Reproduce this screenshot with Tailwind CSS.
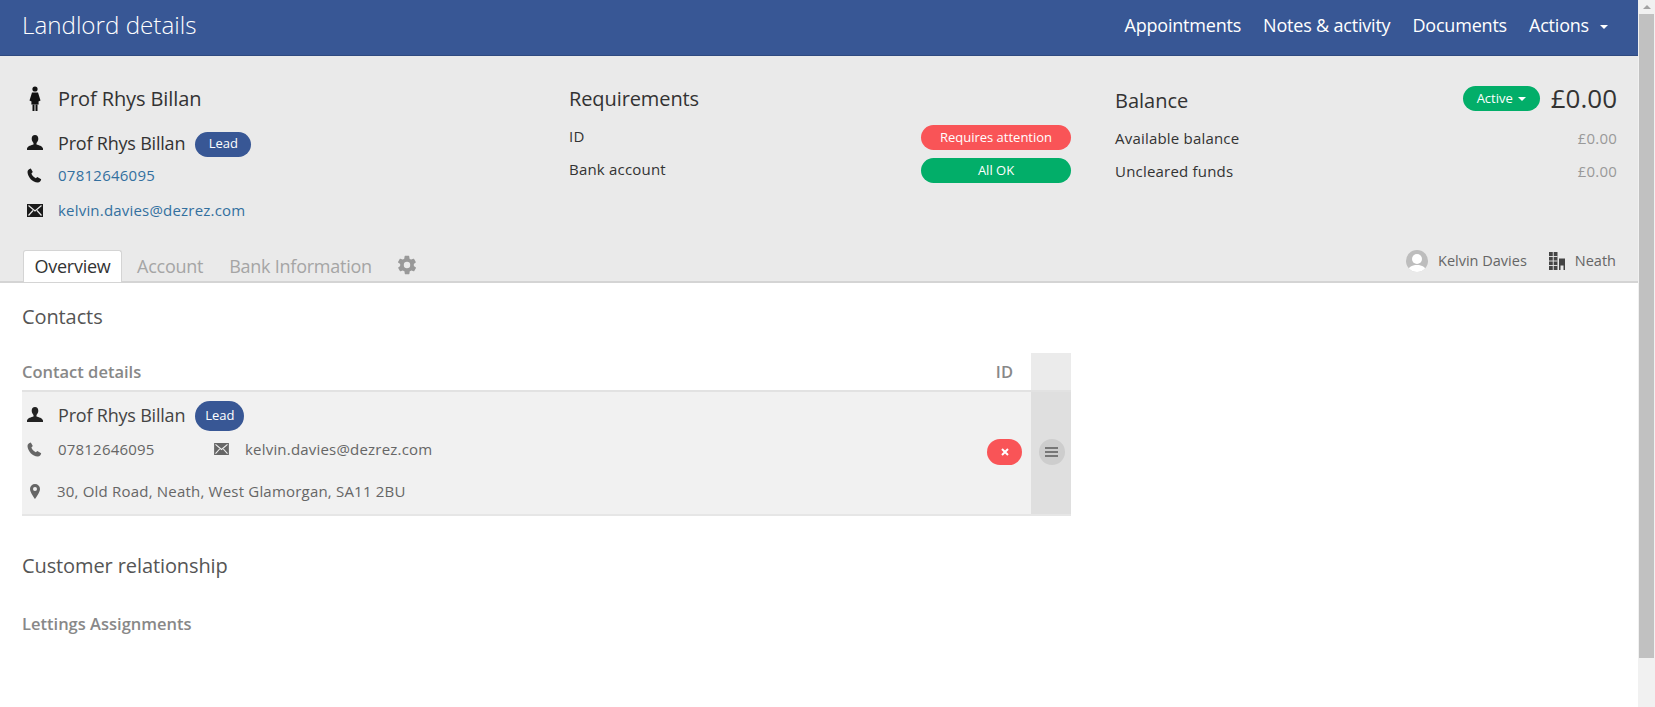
<!DOCTYPE html>
<html lang="en">
<head>
    <meta charset="UTF-8">
    <title>Landlord details</title>
    <script src="https://cdn.jsdelivr.net/npm/@tailwindcss/browser@4"></script>
</head>
<body class="font-['Open_Sans',sans-serif] bg-white text-[#333] overflow-hidden">
<div class="flex h-[707px] w-[1655px]">
    <div class="w-[1638px] shrink-0">
        <!-- top bar -->
        <header class="h-[56px] bg-[#385795] border-b border-[#2f4a80] flex items-center justify-between pl-[22px] pr-[30px] text-white">
            <h1 class="text-[24.200px] font-light leading-[50px] -mt-[5px]">Landlord details</h1>
            <nav class="flex items-center gap-[22px] text-[18px] tracking-[-0.2px] -mt-[5px]">
                <a>Appointments</a>
                <a>Notes &amp; activity</a>
                <a>Documents</a>
                <a class="flex items-center gap-[11px]">Actions <span class="w-0 h-0 border-x-[4px] border-x-transparent border-t-[4px] border-t-white mt-[3px]"></span></a>
            </nav>
        </header>

        <!-- summary panel -->
        <section class="h-[227px] bg-[#eaeaea] border-b-2 border-[#d4d4d4] px-[22px] flex flex-col justify-between">
            <div class="grid grid-cols-[503px_502px_502px] gap-x-[44px] pt-[29px]">
                <div>
                    <div class="flex items-center h-[28px] text-[20px] tracking-[-0.1px]">
                        <svg class="w-[22px] h-[28px] mr-[13px] ml-[1px]" viewBox="0 0 22 28"><circle cx="12" cy="4" r="2.6" fill="#111"/><path d="M9 7.5h6l2.5 8-2 1 .2 3H8.300l.2-3-2-1z" fill="#111"/><path d="M9.500 19.500h2v6.500h-2zM12.500 19.500h2v6.500h-2z" fill="#111"/></svg>
                        <span>Prof Rhys Billan</span>
                    </div>
                    <div class="flex items-center mt-[17px] h-[26px]">
                        <svg class="w-[16px] h-[16px] ml-[5px] mr-[15px]" viewBox="0 0 16 16"><path d="M8 0c2.200 0 3.300 1.700 3.300 3.800 0 1.700-.8 3.200-1.800 4.100v1.500c2 .6 6 1.500 6.500 4.100v1.500H0v-1.500c.5-2.600 4.500-3.500 6.500-4.100V7.900C5.500 7 4.700 5.500 4.700 3.800 4.700 1.700 5.800 0 8 0z" fill="#1a1a1a"/></svg>
                        <span class="text-[18px] tracking-[-0.2px]">Prof Rhys Billan</span>
                        <span class="ml-[10px] h-[25px] w-[56px] flex items-center justify-center rounded-full bg-[#385795] text-white text-[13px] mt-[2px]">Lead</span>
                    </div>
                    <div class="flex items-center mt-[8px] h-[22px]">
                        <svg class="w-[15px] h-[15px] ml-[5px] mr-[16px]" viewBox="0 0 15 15"><path d="M3.800 0.500 5.800 4 4.400 5.600c.7 2 2.300 3.700 4.400 4.700L10.300 9l3.900 2.300c-.3 1.700-1.600 3.300-3.500 3.200C5.500 14.200.8 9.200.5 3.900.5 2.200 2 .7 3.800.5z" fill="#1a1a1a"/></svg>
                        <a class="text-[15px] text-[#33709f] tracking-[0.25px]">07812646095</a>
                    </div>
                    <div class="flex items-center mt-[13px] h-[22px]">
                        <svg class="w-[16px] h-[13px] ml-[5px] mr-[15px]" viewBox="0 0 16 13"><rect width="16" height="13" fill="#1a1a1a"/><path d="M1.500 1.500 8 7l6.500-5.500M1.500 11.500 6 6.500M14.500 11.500 10 6.500" stroke="#eaeaea" stroke-width="1.200" fill="none"/></svg>
                        <a class="text-[15px] text-[#33709f] tracking-[0.2px]">kelvin.davies@dezrez.com</a>
                    </div>
                </div>

                <div>
                    <h2 class="text-[20px] leading-[28px] tracking-[-0.1px]">Requirements</h2>
                    <div class="flex items-center justify-between mt-[11px] h-[25px] text-[15px] tracking-[0.2px]">
                        <span>ID</span>
                        <span class="w-[150px] h-[25px] mt-[2px] flex items-center justify-center rounded-full bg-[#f95457] text-white text-[13px] tracking-normal">Requires attention</span>
                    </div>
                    <div class="flex items-center justify-between mt-[8px] h-[25px] text-[15px] tracking-[0.2px]">
                        <span>Bank account</span>
                        <span class="w-[150px] h-[25px] mt-[2px] flex items-center justify-center rounded-full bg-[#02ae69] text-white text-[13px] tracking-normal">All OK</span>
                    </div>
                </div>

                <div>
                    <div class="flex items-center justify-between h-[28px]">
                        <h2 class="text-[20px] leading-[28px] mt-[3px]">Balance</h2>
                        <div class="flex items-center gap-[11px] -mt-[3px]">
                            <span class="w-[77px] h-[25px] flex items-center justify-center gap-[5px] rounded-full bg-[#02ae69] text-white text-[13px] mt-[2px]">Active <span class="w-0 h-0 border-x-[4px] border-x-transparent border-t-[4px] border-t-white"></span></span>
                            <span class="text-[26px] leading-[28px]">£0.00</span>
                        </div>
                    </div>
                    <div class="flex items-center justify-between mt-[14px] h-[22px] text-[15px] tracking-[0.2px]">
                        <span>Available balance</span><span class="text-[#999]">£0.00</span>
                    </div>
                    <div class="flex items-center justify-between mt-[11px] h-[22px] text-[15px] tracking-[0.2px]">
                        <span>Uncleared funds</span><span class="text-[#999]">£0.00</span>
                    </div>
                </div>
            </div>

            <!-- tabs -->
            <div class="flex items-end justify-between -mb-[1px]">
                <div class="flex items-end text-[18px] tracking-[-0.25px] text-[#a5a5a5]">
                    <a class="ml-[1px] h-[32px] w-[99px] flex items-center justify-center bg-white border border-b-0 border-[#d4d4d4] rounded-t-[3px] text-[#333]">Overview</a>
                    <a class="ml-[15px] h-[32px] flex items-center">Account</a>
                    <a class="ml-[26px] h-[32px] flex items-center">Bank Information</a>
                    <svg class="ml-[24px] mb-[6px] w-[22px] h-[22px]" viewBox="0 0 24 24"><path d="M19.400 13c.1-.3.100-.7.100-1s0-.7-.1-1l2.100-1.600c.2-.2.200-.4.100-.6l-2-3.500c-.1-.2-.4-.3-.6-.2l-2.500 1c-.5-.4-1.100-.7-1.700-1l-.4-2.600c0-.3-.2-.5-.5-.5h-4c-.3 0-.5.200-.5.500l-.4 2.600c-.6.300-1.200.6-1.700 1l-2.500-1c-.2-.1-.5 0-.6.200l-2 3.500c-.1.200-.1.400.1.600L4.600 11c0 .3-.1.700-.1 1s0 .7.100 1l-2.100 1.600c-.2.200-.2.400-.1.600l2 3.500c.1.200.4.300.6.200l2.500-1c.5.400 1.100.7 1.700 1l.4 2.600c0 .3.200.5.500.5h4c.3 0 .5-.2.500-.5l.4-2.600c.6-.3 1.200-.6 1.700-1l2.500 1c.2.100.5 0 .6-.2l2-3.500c.1-.2.100-.4-.1-.6zM12 15.500a3.500 3.500 0 1 1 0-7 3.500 3.500 0 0 1 0 7z" fill="#999"/></svg>
                </div>
                <div class="flex items-center text-[14.500px] text-[#666] mb-[10px]">
                    <svg class="w-[22px] h-[22px] mr-[10px]" viewBox="0 0 22 22"><defs><clipPath id="av"><circle cx="11" cy="11" r="11"/></clipPath></defs><circle cx="11" cy="11" r="11" fill="#bdbdbd"/><g clip-path="url(#av)" fill="#fff"><circle cx="11" cy="9" r="5"/><path d="M1 24c0-6 4-9 10-9s10 3 10 9z"/></g></svg>
                    <span>Kelvin Davies</span>
                    <svg class="ml-[22px] mr-[10px] w-[16px] h-[18px]" viewBox="0 0 16 18"><path d="M0 0h8.500v18H0zM10 6.500h6V18h-1.500v-4.500h-3V18H10z" fill="#444"/><path d="M4.250 0v18M0 4.500h8.500M0 9h8.500M0 13.500h8.500" stroke="#eaeaea" stroke-width=".9"/></svg>
                    <span>Neath</span>
                </div>
            </div>
        </section>

        <!-- overview content -->
        <main class="pl-[22px]">
            <h3 class="text-[20px] leading-[26px] tracking-[-0.1px] text-[#555] mt-[21px]">Contacts</h3>

            <div class="w-[1049px] mt-[23px]">
                <div class="flex h-[39px] border-b-2 border-[#e2e2e2] text-[#888] font-semibold">
                    <div class="flex-1 flex items-center justify-between pr-[18px] pt-[2px]">
                        <span class="text-[16.500px]">Contact details</span><span class="text-[16.500px]">ID</span>
                    </div>
                    <div class="w-[40px] bg-[#ebebeb]"></div>
                </div>
                <div class="flex h-[124px] border-b-2 border-[#e6e6e6] bg-[#f1f1f1] text-[#666]">
                    <div class="flex-1 relative">
                        <div class="flex items-center mt-[8px] h-[30px]">
                            <svg class="w-[16px] h-[16px] ml-[5px] mr-[15px]" viewBox="0 0 16 16"><path d="M8 0c2.200 0 3.300 1.700 3.300 3.800 0 1.700-.8 3.200-1.800 4.100v1.500c2 .6 6 1.500 6.500 4.100v1.500H0v-1.500c.5-2.600 4.500-3.500 6.500-4.100V7.900C5.500 7 4.700 5.500 4.700 3.800 4.700 1.700 5.800 0 8 0z" fill="#222"/></svg>
                            <span class="text-[18px] tracking-[-0.2px] text-[#444]">Prof Rhys Billan</span>
                            <span class="ml-[10px] h-[30px] w-[49px] flex items-center justify-center rounded-[15px] bg-[#385795] text-white text-[13px] mt-[2px]">Lead</span>
                        </div>
                        <div class="flex items-center mt-[8px] h-[22px] text-[15px] tracking-[0.2px]">
                            <svg class="w-[15px] h-[15px] ml-[5px] mr-[16px]" viewBox="0 0 15 15"><path d="M3.800 0.500 5.800 4 4.400 5.600c.7 2 2.300 3.700 4.400 4.700L10.300 9l3.900 2.300c-.3 1.700-1.600 3.300-3.500 3.200C5.500 14.200.8 9.200.5 3.900.5 2.200 2 .7 3.800.5z" fill="#666"/></svg>
                            <span class="w-[156px]">07812646095</span>
                            <svg class="w-[15px] h-[12px] mr-[16px]" viewBox="0 0 16 13"><rect width="16" height="13" fill="#666"/><path d="M1.500 1.500 8 7l6.500-5.500M1.500 11.500 6 6.500M14.500 11.500 10 6.500" stroke="#f1f1f1" stroke-width="1.200" fill="none"/></svg>
                            <span>kelvin.davies@dezrez.com</span>
                        </div>
                        <div class="flex items-center mt-[20px] h-[22px] text-[15px] tracking-[0.2px]">
                            <svg class="w-[10px] h-[15px] ml-[8px] mr-[17px]" viewBox="0 0 10 15"><path fill-rule="evenodd" d="M5 0a5 5 0 0 1 5 5c0 3.500-5 10-5 10S0 8.500 0 5a5 5 0 0 1 5-5zm0 3a2 2 0 1 0 0 4 2 2 0 0 0 0-4z" fill="#666"/></svg>
                            <span>30, Old Road, Neath, West Glamorgan, SA11 2BU</span>
                        </div>
                        <span class="absolute right-[9px] top-[47px] w-[35px] h-[26px] flex items-center justify-center rounded-full bg-[#f95457]">
                            <svg class="w-[8px] h-[8px]" viewBox="0 0 8 8"><path d="M1 1l6 6M7 1L1 7" stroke="#fff" stroke-width="2"/></svg>
                        </span>
                    </div>
                    <div class="w-[40px] bg-[#dfdfdf] flex items-start justify-center pt-[47px] pl-[1px]">
                        <span class="w-[26px] h-[26px] rounded-full bg-[#cdcdcd] flex flex-col items-center justify-center gap-[2px]">
                            <i class="block w-[13px] h-[2px] bg-[#777]"></i><i class="block w-[13px] h-[2px] bg-[#777]"></i><i class="block w-[13px] h-[2px] bg-[#777]"></i>
                        </span>
                    </div>
                </div>
            </div>

            <h3 class="text-[20px] leading-[26px] tracking-[-0.1px] text-[#555] mt-[37px]">Customer relationship</h3>
            <h4 class="text-[16.500px] font-semibold text-[#888] mt-[33px]">Lettings Assignments</h4>
        </main>
    </div>

    <!-- scrollbar -->
    <div class="w-[17px] h-full bg-[#f1f1f1] flex flex-col items-center">
        <div class="h-[14px] flex items-center"><span class="w-0 h-0 border-x-[4px] border-x-transparent border-b-[4px] border-b-[#a3a3a3]"></span></div>
        <div class="w-[15px] h-[644px] bg-[#c1c1c1]"></div>
    </div>
</div>
</body>
</html>
